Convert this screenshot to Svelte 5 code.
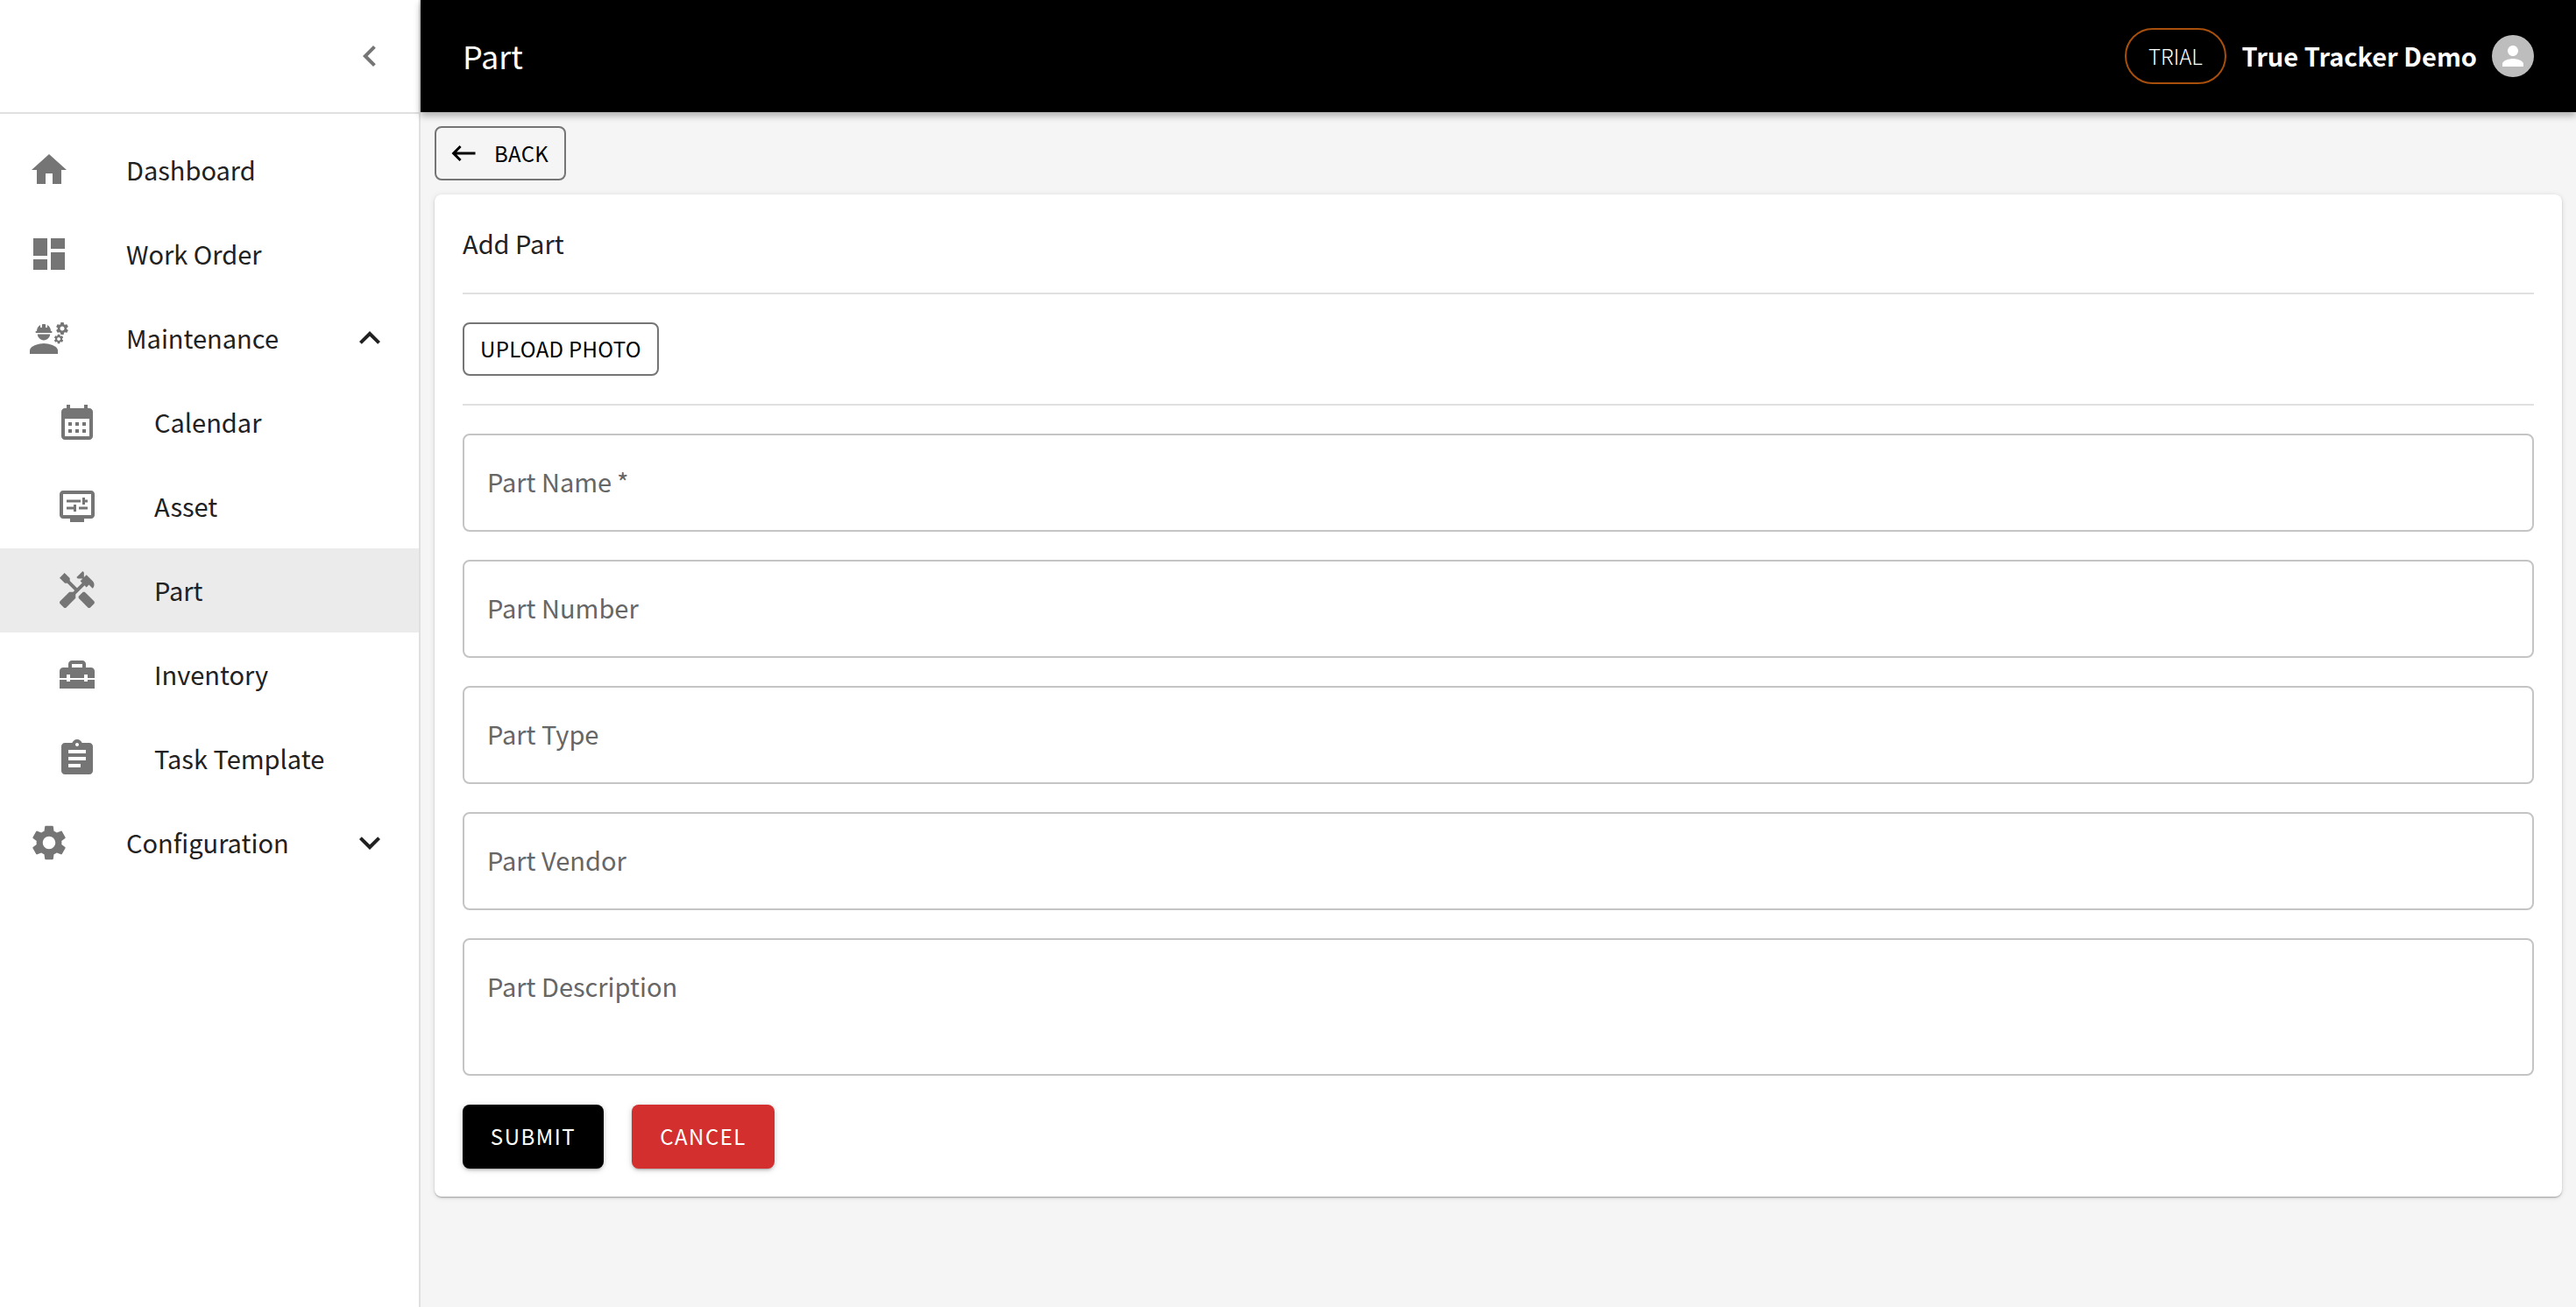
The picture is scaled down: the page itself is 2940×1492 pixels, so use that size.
<script>
  const gear = "M22.1 6.84c.01-.11.02-.22.02-.34 0-.12-.01-.23-.03-.34l.74-.58c.07-.05.08-.15.04-.22l-.7-1.21c-.04-.08-.14-.1-.21-.08l-.86.35c-.18-.14-.38-.25-.59-.34l-.13-.93c-.02-.09-.09-.15-.18-.15h-1.4c-.09 0-.16.06-.17.15l-.13.93c-.21.09-.41.21-.59.34l-.87-.35c-.08-.03-.17 0-.21.08l-.7 1.21c-.04.08-.03.17.04.22l.74.58c-.02.11-.03.23-.03.34 0 .11.01.23.03.34l-.74.58c-.07.05-.08.15-.04.22l.7 1.21c.04.08.14.1.21.08l.87-.35c.18.14.38.25.59.34l.13.93c.01.09.08.15.17.15h1.4c.09 0 .16-.06.17-.15l.13-.93c.21-.09.41-.21.59-.34l.86.35c.08.03.17 0 .21-.08l.7-1.21c.04-.08.03-.17-.04-.22l-.73-.58zm-2.6.91c-.69 0-1.25-.56-1.25-1.25s.56-1.25 1.25-1.25 1.25.56 1.25 1.25-.56 1.25-1.25 1.25z";

  const icons = {
    home: "M10 20v-6h4v6h5v-8h3L12 3 2 12h3v8z",
    dashboard: "M3 13h8V3H3v10zm0 8h8v-6H3v6zm10 0h8V11h-8v10zm0-18v6h8V3h-8z",
    calendar: "M19 4h-1V2h-2v2H8V2H6v2H5c-1.11 0-1.99.9-1.99 2L3 20c0 1.1.89 2 2 2h14c1.1 0 2-.9 2-2V6c0-1.1-.9-2-2-2zm0 16H5V10h14v10zM9 14H7v-2h2v2zm4 0h-2v-2h2v2zm4 0h-2v-2h2v2zm-8 4H7v-2h2v2zm4 0h-2v-2h2v2zm4 0h-2v-2h2v2z",
    asset: "M20 3H4c-1.11 0-2 .89-2 2v12c0 1.1.89 2 2 2h4v2h8v-2h4c1.1 0 2-.9 2-2V5c0-1.11-.9-2-2-2zm0 14H4V5h16v12zM6 8.25h8v1.5H6zm10.5 1.5H18v-1.5h-1.5V7H15v4h1.5v-1.25zm-6.5 2.5H6v1.5h4V15h1.5v-4H10v1.25zm3 0h5v1.5h-5v-1.5z",
    part: "M21.67 18.17l-5.3-5.3h-.99l-2.54 2.54v.99l5.3 5.3c.39.39 1.02.39 1.41 0l2.12-2.12c.39-.38.39-1.02 0-1.41zM17.34 10.19l1.41-1.41 2.12 2.12c1.17-1.17 1.17-3.07 0-4.24l-3.54-3.54-1.41 1.41V1.71l-.7-.71-3.54 3.54.71.71h2.83l-1.41 1.41 1.06 1.06-2.89 2.89-4.13-4.13V5.06L4.83 2.04 2 4.87 5.03 7.9h1.41l4.13 4.13-.85.85H7.6l-5.3 5.3c-.39.39-.39 1.02 0 1.41l2.12 2.12c.39.39 1.02.39 1.41 0l5.3-5.3v-2.12l5.15-5.15 1.06 1.05z",
    inventory: "M18 16h-2v-1H8v1H6v-1H2v5h20v-5h-4zM20 8h-3V6c0-1.1-.9-2-2-2H9c-1.1 0-2 .9-2 2v2H4c-1.1 0-2 .9-2 2v4h4v-2h2v2h8v-2h2v2h4v-4c0-1.1-.9-2-2-2zm-5 0H9V6h6v2z",
    task: "M19 3h-4.18C14.4 1.84 13.3 1 12 1c-1.3 0-2.4.84-2.82 2H5c-1.1 0-2 .9-2 2v14c0 1.1.9 2 2 2h14c1.1 0 2-.9 2-2V5c0-1.1-.9-2-2-2zm-7 0c.55 0 1 .45 1 1s-.45 1-1 1-1-.45-1-1 .45-1 1-1zm2 14H7v-2h7v2zm3-4H7v-2h10v2zm0-4H7V7h10v2z",
    settings: "M19.14 12.94c.04-.3.06-.61.06-.94 0-.32-.02-.64-.07-.94l2.03-1.58c.18-.14.23-.41.12-.61l-1.92-3.32c-.12-.22-.37-.29-.59-.22l-2.39.96c-.5-.38-1.03-.7-1.62-.94l-.36-2.54c-.04-.24-.24-.41-.48-.41h-3.84c-.24 0-.43.17-.47.41l-.36 2.54c-.59.24-1.13.57-1.62.94l-2.39-.96c-.22-.08-.47 0-.59.22L2.74 8.87c-.12.21-.08.47.12.61l2.03 1.58c-.05.3-.09.63-.09.94s.02.64.07.94l-2.03 1.58c-.18.14-.23.41-.12.61l1.92 3.32c.12.22.37.29.59.22l2.39-.96c.5.38 1.03.7 1.62.94l.36 2.54c.05.24.24.41.48.41h3.84c.24 0 .44-.17.47-.41l.36-2.54c.59-.24 1.13-.56 1.62-.94l2.39.96c.22.08.47 0 .59-.22l1.92-3.32c.12-.22.07-.47-.12-.61l-2.01-1.58zM12 15.6c-1.98 0-3.6-1.62-3.6-3.6s1.62-3.6 3.6-3.6 3.6 1.62 3.6 3.6-1.62 3.6-3.6 3.6z"
  };

  const up = "M12 8l-6 6 1.41 1.41L12 10.83l4.59 4.58L18 14z";
  const down = "M16.59 8.59L12 13.17 7.41 8.59 6 10l6 6 6-6z";

  const nav = [
    { label: "Dashboard", icon: "home" },
    { label: "Work Order", icon: "dashboard" },
    { label: "Maintenance", icon: "engineering", chevron: up },
    { label: "Calendar", icon: "calendar", sub: true },
    { label: "Asset", icon: "asset", sub: true },
    { label: "Part", icon: "part", sub: true, active: true },
    { label: "Inventory", icon: "inventory", sub: true },
    { label: "Task Template", icon: "task", sub: true },
    { label: "Configuration", icon: "settings", chevron: down }
  ];

  const fields = ["Part Name\u2009*", "Part Number", "Part Type", "Part Vendor"];
</script>

<div class="shell">
  <aside class="sidebar">
    <div class="side-head">
      <svg class="collapse" viewBox="0 0 24 24"><path d="M15.41 7.41L14 6l-6 6 6 6 1.41-1.41L10.83 12z" /></svg>
    </div>
    <nav class="menu">
      {#each nav as item}
        <div class="item" class:sub={item.sub} class:active={item.active}>
          <svg class="icon" viewBox="0 0 24 24">
            {#if item.icon === "engineering"}
              <path d="M9 15c-2.67 0-8 1.34-8 4v2h16v-2c0-2.66-5.33-4-8-4z" />
              <path d="M9 13.2c1.9 0 3.5-1.5 3.6-3.4H5.4c.1 1.9 1.7 3.4 3.6 3.4z" />
              <path d="M4.74 9h8.53c.27 0 .49-.22.49-.49v-.02c0-.27-.22-.49-.49-.49H13c0-1.48-.81-2.75-2-3.45v.95c0 .28-.22.5-.5.5s-.5-.22-.5-.5V4.14C9.68 4.06 9.35 4 9 4s-.68.06-1 .14V5.5c0 .28-.22.5-.5.5S7 5.78 7 5.5v-.95C5.81 5.25 5 6.52 5 8h-.26c-.27 0-.49.22-.49.49v.03c0 .26.22.48.49.48z" />
              <path d={gear} />
              <path d={gear} transform="translate(2.9 7.62) scale(0.75)" />
            {:else}
              <path d={icons[item.icon]} />
            {/if}
          </svg>
          <span class="label">{item.label}</span>
          {#if item.chevron}
            <svg class="chevron" viewBox="0 0 24 24"><path d={item.chevron} /></svg>
          {/if}
        </div>
      {/each}
    </nav>
  </aside>

  <div class="main">
    <header class="topbar">
      <div class="title">Part</div>
      <div class="user">
        <span class="trial">TRIAL</span>
        <span class="name">True Tracker Demo</span>
        <span class="avatar">
          <svg viewBox="0 0 24 24"><path d="M12 12c2.21 0 4-1.79 4-4s-1.79-4-4-4-4 1.79-4 4 1.79 4 4 4zm0 2c-2.67 0-8 1.34-8 4v2h16v-2c0-2.66-5.33-4-8-4z" /></svg>
        </span>
      </div>
    </header>

    <main class="content">
      <button class="back">
        <svg viewBox="0 0 24 24"><path d="M21 11H6.83l3.58-3.59L9 6l-6 6 6 6 1.41-1.41L6.83 13H21z" /></svg>
        <span>BACK</span>
      </button>

      <section class="card">
        <h2>Add Part</h2>
        <hr />
        <div class="upload-row">
          <button class="upload"><span>UPLOAD PHOTO</span></button>
        </div>
        <hr />
        <form class="form">
          {#each fields as placeholder}
            <input type="text" {placeholder} />
          {/each}
          <textarea placeholder="Part Description"></textarea>
        </form>
        <div class="actions">
          <button class="solid submit"><span>SUBMIT</span></button>
          <button class="solid cancel"><span>CANCEL</span></button>
        </div>
      </section>
    </main>
  </div>
</div>

<style>
  :global(body) {
    background: #f5f5f5;
  }

  .shell {
    display: flex;
    height: 100vh;
    overflow: hidden;
    font-family: "Noto Sans CJK KR", "Noto Sans", sans-serif;
    color: #212121;
  }

  /* sidebar */
  .sidebar {
    flex: 0 0 480px;
    box-sizing: border-box;
    background: #fff;
    border-right: 2px solid #e0e0e0;
  }

  .side-head {
    height: 130px;
    box-sizing: border-box;
    border-bottom: 2px solid #e0e0e0;
    display: flex;
    align-items: center;
    justify-content: flex-end;
    padding-right: 32px;
  }

  .collapse {
    width: 48px;
    height: 48px;
    fill: #757575;
  }

  .menu {
    padding-top: 16px;
  }

  .item {
    height: 96px;
    display: flex;
    align-items: center;
    padding: 0 32px;
  }

  .item.sub {
    padding-left: 64px;
  }

  .item.active {
    background: #ebebeb;
  }

  .icon {
    flex: 0 0 48px;
    width: 48px;
    height: 48px;
    margin-right: 64px;
    fill: #757575;
  }

  .label {
    flex: 1;
    font-size: 29px;
    line-height: 48px;
    padding-bottom: 3px;
  }

  .chevron {
    width: 48px;
    height: 48px;
    fill: #212121;
  }

  /* top bar */
  .main {
    flex: 1;
    min-width: 0;
    display: flex;
    flex-direction: column;
  }

  .topbar {
    flex: 0 0 128px;
    background: #000;
    color: #fff;
    display: flex;
    align-items: center;
    justify-content: space-between;
    padding: 0 48px;
    box-shadow: 0 4px 8px rgba(0, 0, 0, 0.3);
    position: relative;
  }

  .title {
    font-size: 36px;
    padding-bottom: 2px;
  }

  .user {
    display: flex;
    align-items: center;
  }

  .trial {
    box-sizing: border-box;
    width: 116px;
    height: 64px;
    border: 2px solid #a84f0b;
    border-radius: 32px;
    display: flex;
    align-items: center;
    justify-content: center;
    font-size: 24px;
    font-weight: 300;
    padding: 0 1px 2px 0;
  }

  .name {
    margin: 0 17px;
    font-size: 29px;
    font-weight: 700;
    padding-bottom: 2px;
  }

  .avatar {
    width: 48px;
    height: 48px;
    border-radius: 50%;
    background: #bdbdbd;
    display: flex;
    align-items: center;
    justify-content: center;
  }

  .avatar svg {
    width: 36px;
    height: 36px;
    fill: #fff;
  }

  /* content */
  .content {
    flex: 1;
    padding: 16px;
  }

  button {
    font-family: inherit;
    cursor: pointer;
  }

  button span {
    position: relative;
    top: -1px;
  }

  .back {
    box-sizing: border-box;
    height: 62px;
    width: 150px;
    padding: 0 0 0 13px;
    display: flex;
    align-items: center;
    gap: 17px;
    background: transparent;
    border: 2px solid #757575;
    border-radius: 8px;
    font-size: 24px;
    letter-spacing: 0.3px;
    color: #000;
  }

  .back svg {
    width: 36px;
    height: 36px;
    fill: #000;
  }

  .card {
    margin-top: 16px;
    box-sizing: border-box;
    height: 1144px;
    padding: 0 32px;
    background: #fff;
    border-radius: 8px;
    box-shadow: 0 2px 2px -1px rgba(0, 0, 0, 0.2), 0 1px 2px rgba(0, 0, 0, 0.14), 0 1px 6px rgba(0, 0, 0, 0.12);
  }

  h2 {
    margin: 0;
    height: 112px;
    display: flex;
    align-items: center;
    padding-bottom: 3px;
    box-sizing: border-box;
    font-size: 29px;
    font-weight: 400;
  }

  hr {
    margin: 0;
    border: 0;
    height: 2px;
    background: #e0e0e0;
  }

  .upload-row {
    padding: 32px 0;
    display: flex;
  }

  .upload {
    box-sizing: border-box;
    height: 61px;
    width: 224px;
    padding: 0;
    background: #fff;
    border: 2px solid #757575;
    border-radius: 8px;
    font-size: 24px;
    letter-spacing: 0.3px;
    color: #000;
  }

  .form {
    display: flex;
    flex-direction: column;
    gap: 32px;
    padding-top: 32px;
  }

  input,
  textarea {
    display: block;
    box-sizing: border-box;
    width: 100%;
    height: 112px;
    padding: 0 26px 4px;
    border: 2px solid #c4c4c4;
    border-radius: 8px;
    outline: none;
    resize: none;
    background: #fff;
    font-family: inherit;
    font-size: 29px;
  }

  textarea {
    height: 157px;
    padding-top: 30px;
    line-height: 44px;
  }

  input::placeholder,
  textarea::placeholder {
    color: #666;
    opacity: 1;
  }

  .actions {
    display: flex;
    gap: 32px;
    margin-top: 33px;
  }

  .solid {
    height: 73px;
    padding: 0;
    border: 0;
    border-radius: 8px;
    color: #fff;
    font-size: 24px;
    letter-spacing: 1.5px;
    box-shadow: 0 3px 2px -2px rgba(0, 0, 0, 0.2), 0 2px 4px rgba(0, 0, 0, 0.14), 0 1px 8px rgba(0, 0, 0, 0.12);
  }

  .submit {
    width: 161px;
    background: #000;
  }

  .cancel {
    width: 163px;
    background: #d32f2f;
  }
</style>
